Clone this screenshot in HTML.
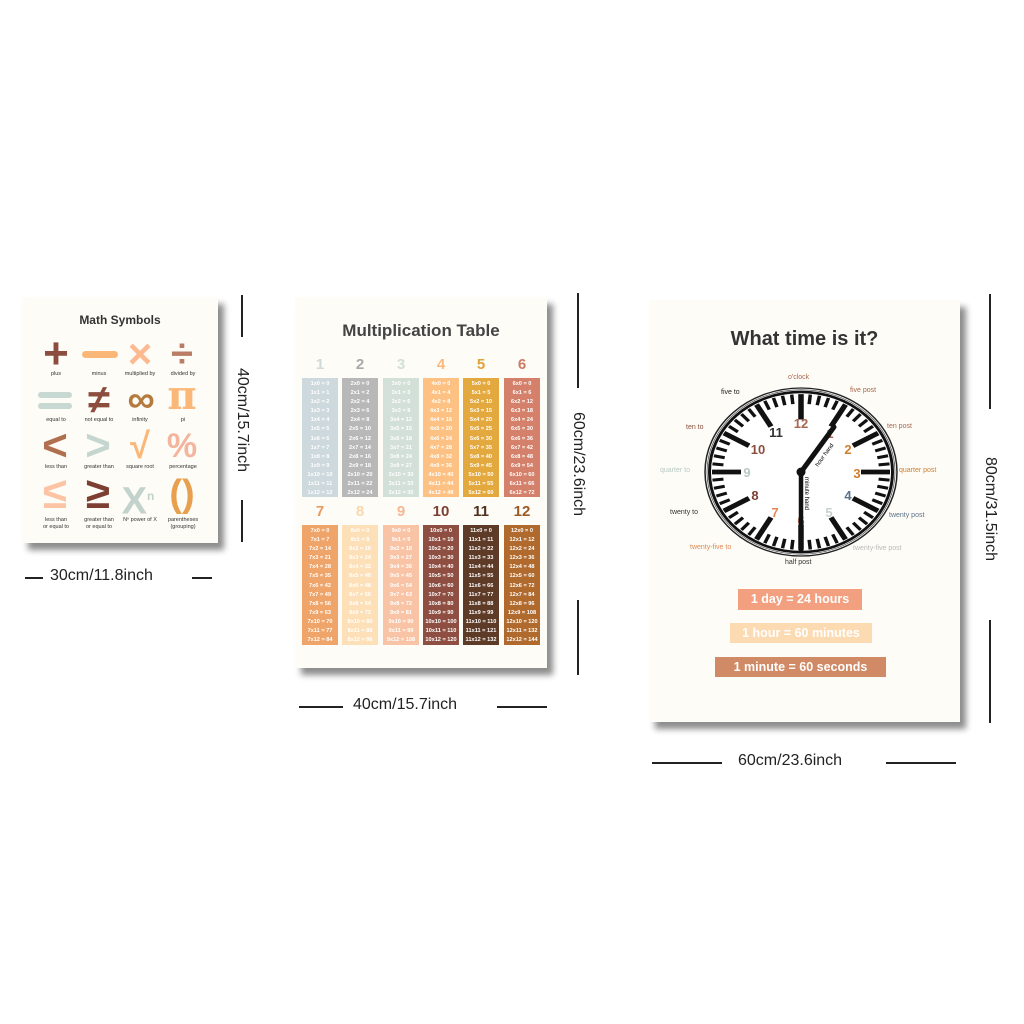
<!DOCTYPE html>
<html><head><meta charset="utf-8"><style>
body{margin:0;width:1024px;height:1024px;background:#fff;position:relative;overflow:hidden;font-family:"Liberation Sans","DejaVu Sans",sans-serif}
.p{position:absolute;background:#fdfcf6;box-shadow:6px 7px 6px rgba(0,0,0,.45)}
.t{position:absolute;white-space:nowrap}
.dim{position:absolute;font-size:16px;color:#222;white-space:nowrap}
.vd{position:absolute;width:140px;height:18px;line-height:18px;text-align:center;font-size:16px;color:#222;white-space:nowrap;transform:rotate(90deg)}
.ln{position:absolute;background:#222}
.col{position:absolute;width:36px;color:#fff;font-size:5.6px;text-align:center;line-height:9.1px;padding-top:2px;box-sizing:border-box;font-weight:bold}
.hd{position:absolute;width:36px;text-align:center;font-size:15px;font-weight:bold}
.sym{position:absolute;width:42px;text-align:center;font-weight:bold}
.lb{position:absolute;width:44px;text-align:center;font-size:5.5px;color:#333;line-height:7px}
.bar{position:absolute;color:#fff;font-size:12.5px;font-weight:bold;text-align:center;line-height:20px}
.cl{position:absolute;font-size:7px;white-space:nowrap}
</style></head><body>

<div class="p" style="left:22px;top:297px;width:196px;height:246px">
<div class="t" style="left:0;width:196px;text-align:center;top:16px;font-size:12px;font-weight:bold;color:#333">Math Symbols</div>
</div>
<div class="sym" style="left:35px;top:334px;font-size:44px;color:#8d4d3e;line-height:40px">+</div>
<div style="position:absolute;left:82px;top:351px;width:36px;height:7px;border-radius:4px;background:#fbb778"></div>
<div class="sym" style="left:119px;top:334px;font-size:42px;color:#fdb990;line-height:40px">×</div>
<div class="sym" style="left:161px;top:334px;font-size:40px;color:#b97d66;line-height:40px">÷</div>
<div class="lb" style="left:34px;top:371px">plus</div><div class="lb" style="left:77px;top:371px">minus</div><div class="lb" style="left:118px;top:371px">multiplied by</div><div class="lb" style="left:161px;top:371px">divided by</div>
<div style="position:absolute;left:38px;top:392px;width:34px;height:6px;border-radius:3px;background:#c8d8d3"></div>
<div style="position:absolute;left:38px;top:403px;width:34px;height:6px;border-radius:3px;background:#c8d8d3"></div>
<div class="sym" style="left:78px;top:380px;font-size:40px;color:#8d4d3e;line-height:40px">≠</div>
<div class="sym" style="left:120px;top:380px;font-size:38px;color:#b57a3e;line-height:40px">∞</div>
<div class="sym" style="left:161px;top:376px;font-size:40px;color:#fbb778;line-height:40px;font-family:'DejaVu Serif',serif">π</div>
<div class="lb" style="left:34px;top:417px">equal to</div><div class="lb" style="left:77px;top:417px">not equal to</div><div class="lb" style="left:118px;top:417px">infinity</div><div class="lb" style="left:161px;top:417px">pi</div>
<div class="sym" style="left:34px;top:424px;font-size:44px;color:#b0704f;line-height:44px">&lt;</div>
<div class="sym" style="left:77px;top:424px;font-size:44px;color:#c5d5cf;line-height:44px">&gt;</div>
<div class="sym" style="left:119px;top:424px;font-size:36px;color:#fbb778;line-height:44px">√</div>
<div class="sym" style="left:161px;top:424px;font-size:34px;color:#f3b59e;line-height:44px">%</div>
<div class="lb" style="left:34px;top:464px">less than</div><div class="lb" style="left:77px;top:464px">greater than</div><div class="lb" style="left:118px;top:464px">square root</div><div class="lb" style="left:161px;top:464px">percentage</div>
<div class="sym" style="left:34px;top:472px;font-size:44px;color:#fcc3a4;line-height:44px">≤</div>
<div class="sym" style="left:77px;top:472px;font-size:44px;color:#7e3f33;line-height:44px">≥</div>
<div class="sym" style="left:117px;top:474px;font-size:38px;color:#c3d2cc;line-height:44px">X<sup style="font-size:12px">n</sup></div>
<div class="sym" style="left:161px;top:472px;font-size:38px;color:#e8a04e;line-height:44px">()</div>
<div class="lb" style="left:34px;top:517px">less than<br>or equal to</div><div class="lb" style="left:77px;top:517px">greater than<br>or equal to</div><div class="lb" style="left:118px;top:517px">Nⁿ power of X</div><div class="lb" style="left:161px;top:517px">parentheses<br>(grouping)</div>

<div class="vd" style="left:172px;top:411px">40cm/15.7inch</div>
<div class="ln" style="left:241px;top:295px;width:2px;height:42px"></div>
<div class="ln" style="left:241px;top:500px;width:2px;height:42px"></div>
<div class="dim" style="left:50px;top:567px">30cm/11.8inch</div>
<div class="ln" style="left:25px;top:577px;width:18px;height:2px"></div>
<div class="ln" style="left:192px;top:577px;width:20px;height:2px"></div>

<div class="p" style="left:295px;top:297px;width:252px;height:371px">
<div class="t" style="left:0;width:252px;text-align:center;top:24px;font-size:17px;font-weight:bold;color:#444">Multiplication Table</div>
</div>
<div class="hd" style="left:302px;top:356px;color:#cfdadd">1</div>
<div class="hd" style="left:342px;top:356px;color:#a9a9a9">2</div>
<div class="hd" style="left:383px;top:356px;color:#d2e0d5">3</div>
<div class="hd" style="left:423px;top:356px;color:#fbb97a">4</div>
<div class="hd" style="left:463px;top:356px;color:#e0a23a">5</div>
<div class="hd" style="left:504px;top:356px;color:#cf7a62">6</div>
<div class="col" style="left:302px;top:378px;height:119px;background:#cdd9dc">1x0 = 0<br>1x1 = 1<br>1x2 = 2<br>1x3 = 3<br>1x4 = 4<br>1x5 = 5<br>1x6 = 6<br>1x7 = 7<br>1x8 = 8<br>1x9 = 9<br>1x10 = 10<br>1x11 = 11<br>1x12 = 12</div>
<div class="col" style="left:342px;top:378px;height:119px;background:#b8b8b8">2x0 = 0<br>2x1 = 2<br>2x2 = 4<br>2x3 = 6<br>2x4 = 8<br>2x5 = 10<br>2x6 = 12<br>2x7 = 14<br>2x8 = 16<br>2x9 = 18<br>2x10 = 20<br>2x11 = 22<br>2x12 = 24</div>
<div class="col" style="left:383px;top:378px;height:119px;background:#d3e0d8">3x0 = 0<br>3x1 = 3<br>3x2 = 6<br>3x3 = 9<br>3x4 = 12<br>3x5 = 15<br>3x6 = 18<br>3x7 = 21<br>3x8 = 24<br>3x9 = 27<br>3x10 = 30<br>3x11 = 33<br>3x12 = 36</div>
<div class="col" style="left:423px;top:378px;height:119px;background:#fdc283">4x0 = 0<br>4x1 = 4<br>4x2 = 8<br>4x3 = 12<br>4x4 = 16<br>4x5 = 20<br>4x6 = 24<br>4x7 = 28<br>4x8 = 32<br>4x9 = 36<br>4x10 = 40<br>4x11 = 44<br>4x12 = 48</div>
<div class="col" style="left:463px;top:378px;height:119px;background:#e4a93e">5x0 = 0<br>5x1 = 5<br>5x2 = 10<br>5x3 = 15<br>5x4 = 20<br>5x5 = 25<br>5x6 = 30<br>5x7 = 35<br>5x8 = 40<br>5x9 = 45<br>5x10 = 50<br>5x11 = 55<br>5x12 = 60</div>
<div class="col" style="left:504px;top:378px;height:119px;background:#d4806a">6x0 = 0<br>6x1 = 6<br>6x2 = 12<br>6x3 = 18<br>6x4 = 24<br>6x5 = 30<br>6x6 = 36<br>6x7 = 42<br>6x8 = 48<br>6x9 = 54<br>6x10 = 60<br>6x11 = 66<br>6x12 = 72</div>
<div class="hd" style="left:302px;top:503px;color:#e99a5e">7</div>
<div class="hd" style="left:342px;top:503px;color:#fcd7ad">8</div>
<div class="hd" style="left:383px;top:503px;color:#f7b794">9</div>
<div class="hd" style="left:423px;top:503px;color:#7c3f34">10</div>
<div class="hd" style="left:463px;top:503px;color:#4e3120">11</div>
<div class="hd" style="left:504px;top:503px;color:#9c5a25">12</div>
<div class="col" style="left:302px;top:525px;height:120px;background:#efa469">7x0 = 0<br>7x1 = 7<br>7x2 = 14<br>7x3 = 21<br>7x4 = 28<br>7x5 = 35<br>7x6 = 42<br>7x7 = 49<br>7x8 = 56<br>7x9 = 63<br>7x10 = 70<br>7x11 = 77<br>7x12 = 84</div>
<div class="col" style="left:342px;top:525px;height:120px;background:#fde0b8">8x0 = 0<br>8x1 = 8<br>8x2 = 16<br>8x3 = 24<br>8x4 = 32<br>8x5 = 40<br>8x6 = 48<br>8x7 = 56<br>8x8 = 64<br>8x9 = 72<br>8x10 = 80<br>8x11 = 88<br>8x12 = 96</div>
<div class="col" style="left:383px;top:525px;height:120px;background:#f9c4a6">9x0 = 0<br>9x1 = 9<br>9x2 = 18<br>9x3 = 27<br>9x4 = 36<br>9x5 = 45<br>9x6 = 54<br>9x7 = 63<br>9x8 = 72<br>9x9 = 81<br>9x10 = 90<br>9x11 = 99<br>9x12 = 108</div>
<div class="col" style="left:423px;top:525px;height:120px;background:#8e4f42">10x0 = 0<br>10x1 = 10<br>10x2 = 20<br>10x3 = 30<br>10x4 = 40<br>10x5 = 50<br>10x6 = 60<br>10x7 = 70<br>10x8 = 80<br>10x9 = 90<br>10x10 = 100<br>10x11 = 110<br>10x12 = 120</div>
<div class="col" style="left:463px;top:525px;height:120px;background:#5e3b27">11x0 = 0<br>11x1 = 11<br>11x2 = 22<br>11x3 = 33<br>11x4 = 44<br>11x5 = 55<br>11x6 = 66<br>11x7 = 77<br>11x8 = 88<br>11x9 = 99<br>11x10 = 110<br>11x11 = 121<br>11x12 = 132</div>
<div class="col" style="left:504px;top:525px;height:120px;background:#b06a2d">12x0 = 0<br>12x1 = 12<br>12x2 = 24<br>12x3 = 36<br>12x4 = 48<br>12x5 = 60<br>12x6 = 72<br>12x7 = 84<br>12x8 = 96<br>12x9 = 108<br>12x10 = 120<br>12x11 = 132<br>12x12 = 144</div>

<div class="vd" style="left:508px;top:455px">60cm/23.6inch</div>
<div class="ln" style="left:577px;top:293px;width:2px;height:95px"></div>
<div class="ln" style="left:577px;top:600px;width:2px;height:75px"></div>
<div class="dim" style="left:353px;top:696px">40cm/15.7inch</div>
<div class="ln" style="left:299px;top:706px;width:44px;height:2px"></div>
<div class="ln" style="left:497px;top:706px;width:50px;height:2px"></div>

<div class="p" style="left:649px;top:300px;width:311px;height:422px">
<div class="t" style="left:0;width:311px;text-align:center;top:28px;font-size:20px;font-weight:bold;color:#333">What time is it?</div>
</div>
<svg style="position:absolute;left:0;top:0" width="1024" height="1024">
<defs>
<line id="mt" x1="0" y1="-78" x2="0" y2="-89" stroke="#111" stroke-width="3.5"/>
<line id="Mt" x1="0" y1="-60" x2="0" y2="-89" stroke="#111" stroke-width="5.5"/>
</defs>
<g transform="translate(801,472) scale(1,0.875)">
<circle r="96" fill="#fff" stroke="#222" stroke-width="1.5"/>
<circle r="94" fill="none" stroke="#555" stroke-width="0.8"/>
<circle r="91.5" fill="none" stroke="#111" stroke-width="3"/>
<use href="#Mt"/><use href="#Mt" transform="rotate(30)"/><use href="#Mt" transform="rotate(60)"/><use href="#Mt" transform="rotate(90)"/><use href="#Mt" transform="rotate(120)"/><use href="#Mt" transform="rotate(150)"/><use href="#Mt" transform="rotate(180)"/><use href="#Mt" transform="rotate(210)"/><use href="#Mt" transform="rotate(240)"/><use href="#Mt" transform="rotate(270)"/><use href="#Mt" transform="rotate(300)"/><use href="#Mt" transform="rotate(330)"/>
<g id="q"><use href="#mt" transform="rotate(6)"/><use href="#mt" transform="rotate(12)"/><use href="#mt" transform="rotate(18)"/><use href="#mt" transform="rotate(24)"/></g>
<use href="#q" transform="rotate(30)"/><use href="#q" transform="rotate(60)"/><use href="#q" transform="rotate(90)"/><use href="#q" transform="rotate(120)"/><use href="#q" transform="rotate(150)"/><use href="#q" transform="rotate(180)"/><use href="#q" transform="rotate(210)"/><use href="#q" transform="rotate(240)"/><use href="#q" transform="rotate(270)"/><use href="#q" transform="rotate(300)"/><use href="#q" transform="rotate(330)"/>
</g>
<g font-family="Liberation Sans,sans-serif" font-weight="bold" font-size="13" text-anchor="middle">
<text x="801" y="428" fill="#a9674f">12</text><text x="830" y="438" fill="#a9674f">1</text><text x="848" y="454" fill="#d07d2e">2</text><text x="857" y="478" fill="#d07d2e">3</text><text x="848" y="500" fill="#5c7288">4</text><text x="829" y="517" fill="#c9d0d0">5</text><text x="801" y="525" fill="#a9674f">6</text><text x="775" y="517" fill="#e18a55">7</text><text x="755" y="500" fill="#7c3f34">8</text><text x="747" y="477" fill="#b8c9c4">9</text><text x="758" y="454" fill="#8d4d3e">10</text><text x="776" y="437" fill="#333">11</text>
</g>
<line x1="801" y1="472" x2="834" y2="427" stroke="#111" stroke-width="5" stroke-linecap="round"/>
<line x1="801" y1="472" x2="801" y2="552" stroke="#111" stroke-width="4.5"/>
<circle cx="801" cy="472" r="4.5" fill="#111"/>
<text x="0" y="0" font-size="6" font-family="Liberation Sans,sans-serif" transform="translate(818,467) rotate(-54)">hour hand</text>
<text x="0" y="0" font-size="6" font-family="Liberation Sans,sans-serif" transform="translate(805,477) rotate(90)">minute hand</text>
</svg>
<div class="cl" style="left:788px;top:374px;color:#a9674f">o'clock</div>
<div class="cl" style="left:721px;top:389px;color:#222">five to</div>
<div class="cl" style="left:850px;top:387px;color:#a9674f">five post</div>
<div class="cl" style="left:686px;top:424px;color:#8d4d3e">ten to</div>
<div class="cl" style="left:887px;top:423px;color:#a9674f">ten post</div>
<div class="cl" style="left:660px;top:467px;color:#b8c9c4">quarter to</div>
<div class="cl" style="left:899px;top:467px;color:#d07d2e">quarter post</div>
<div class="cl" style="left:670px;top:509px;color:#333">twenty to</div>
<div class="cl" style="left:889px;top:512px;color:#5c7288">twenty post</div>
<div class="cl" style="left:690px;top:544px;color:#e18a55">twenty-five to</div>
<div class="cl" style="left:853px;top:545px;color:#bbb">twenty-five post</div>
<div class="cl" style="left:785px;top:559px;color:#333">half post</div>

<div class="bar" style="left:738px;top:589px;width:124px;height:21px;background:#f3a080">1 day = 24 hours</div>
<div class="bar" style="left:730px;top:623px;width:142px;height:20px;background:#fcdbb3">1 hour = 60 minutes</div>
<div class="bar" style="left:715px;top:657px;width:171px;height:20px;background:#d08a66">1 minute = 60 seconds</div>

<div class="vd" style="left:920px;top:500px">80cm/31.5inch</div>
<div class="ln" style="left:989px;top:294px;width:2px;height:115px"></div>
<div class="ln" style="left:989px;top:620px;width:2px;height:103px"></div>
<div class="dim" style="left:738px;top:752px">60cm/23.6inch</div>
<div class="ln" style="left:652px;top:762px;width:70px;height:2px"></div>
<div class="ln" style="left:886px;top:762px;width:70px;height:2px"></div>
</body></html>
